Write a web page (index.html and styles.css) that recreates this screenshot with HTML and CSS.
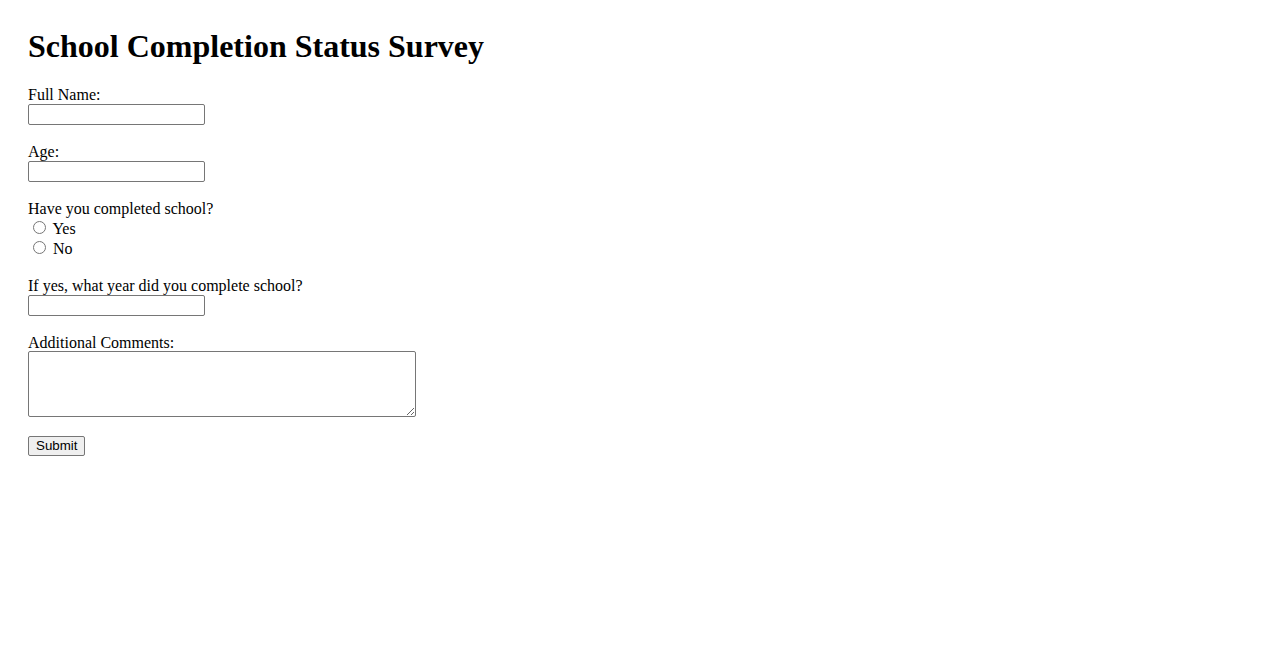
FILE: index.html
```html
<!DOCTYPE html>
<html>
<head>
<meta charset="utf-8">
<title>School Completion Status Survey</title>
<link rel="stylesheet" href="styles.css">
</head>
<body>
<h1 class="title">School Completion Status Survey</h1>
<form class="survey">
  <div class="field">
    <label class="field-label" for="name">Full Name:</label>
    <input class="text-input" type="text" id="name" name="name">
  </div>
  <div class="field">
    <label class="field-label" for="age">Age:</label>
    <input class="text-input" type="text" id="age" name="age">
  </div>
  <div class="field field-radio">
    <label class="field-label">Have you completed school?</label>
    <div class="radio-row"><input class="radio" type="radio" id="yes" name="completed" value="yes"> <label for="yes">Yes</label></div>
    <div class="radio-row"><input class="radio" type="radio" id="no" name="completed" value="no"> <label for="no">No</label></div>
  </div>
  <div class="field">
    <label class="field-label" for="year">If yes, what year did you complete school?</label>
    <input class="text-input" type="text" id="year" name="year">
  </div>
  <div class="field">
    <label class="field-label" for="comments">Additional Comments:</label>
    <textarea class="comments" id="comments" name="comments"></textarea>
  </div>
  <button class="submit" type="submit">Submit</button>
</form>
</body>
</html>
```
FILE: styles.css
```css
body {
  margin: 8px;
  padding: 20px;
  font-family: "Liberation Serif", "Times New Roman", serif;
  font-size: 16px;
  color: #000;
  background: #fff;
}
.title {
  font-size: 32px;
  font-weight: bold;
  margin: 0 0 21px;
}
.field {
  margin-bottom: 18px;
}
.field-radio {
  margin-bottom: 19px;
}
.field-label {
  display: block;
}
.text-input {
  box-sizing: border-box;
  width: 177px;
  height: 21px;
  margin: 0;
  border: 1px solid #767676;
  border-radius: 2px;
  padding: 1px 2px;
  font-family: "Liberation Sans", Arial, sans-serif;
  font-size: 13.33px;
  vertical-align: baseline;
}
.radio {
  margin: 3px 3px 0 5px;
  width: 13px;
  height: 13px;
}
.comments {
  box-sizing: border-box;
  width: 388px;
  height: 66px;
  margin: -1px 0 0;
  border: 1px solid #767676;
  border-radius: 2px;
  padding: 2px;
  display: block;
  font-family: "Liberation Mono", monospace;
  font-size: 13.33px;
}
.submit {
  font-family: "Liberation Sans", Arial, sans-serif;
  font-size: 13.33px;
  line-height: 16px;
  padding: 1px 7px;
  margin: 1px 0 0;
  border: 1px solid #767676;
  border-radius: 2px;
  background: #efefef;
  color: #000;
}
```
